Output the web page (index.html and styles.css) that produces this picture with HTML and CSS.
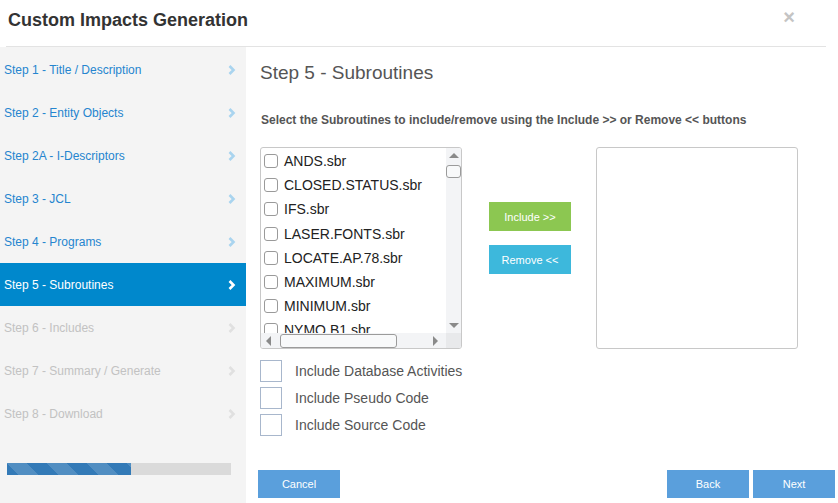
FILE: index.html
```html
<!DOCTYPE html>
<html>
<head>
<meta charset="utf-8">
<link rel="stylesheet" href="styles.css">
</head>
<body>
<div class="modal">
  <header class="header">
    <h1 class="title">Custom Impacts Generation</h1>
    <span class="close">×</span>
  </header>
  <div class="body">
    <aside class="sidebar">
      <nav class="steps">
        <a class="step done">Step 1 - Title / Description<svg class="chev" viewBox="0 0 8 10"><polyline points="1.5,1 5.5,5 1.5,9"/></svg></a>
        <a class="step done">Step 2 - Entity Objects<svg class="chev" viewBox="0 0 8 10"><polyline points="1.5,1 5.5,5 1.5,9"/></svg></a>
        <a class="step done">Step 2A - I-Descriptors<svg class="chev" viewBox="0 0 8 10"><polyline points="1.5,1 5.5,5 1.5,9"/></svg></a>
        <a class="step done">Step 3 - JCL<svg class="chev" viewBox="0 0 8 10"><polyline points="1.5,1 5.5,5 1.5,9"/></svg></a>
        <a class="step done">Step 4 - Programs<svg class="chev" viewBox="0 0 8 10"><polyline points="1.5,1 5.5,5 1.5,9"/></svg></a>
        <a class="step active">Step 5 - Subroutines<svg class="chev" viewBox="0 0 8 10"><polyline points="1.5,1 5.5,5 1.5,9"/></svg></a>
        <a class="step todo">Step 6 - Includes<svg class="chev" viewBox="0 0 8 10"><polyline points="1.5,1 5.5,5 1.5,9"/></svg></a>
        <a class="step todo">Step 7 - Summary / Generate<svg class="chev" viewBox="0 0 8 10"><polyline points="1.5,1 5.5,5 1.5,9"/></svg></a>
        <a class="step todo">Step 8 - Download<svg class="chev" viewBox="0 0 8 10"><polyline points="1.5,1 5.5,5 1.5,9"/></svg></a>
      </nav>
      <div class="progress"><div class="progress-bar" style="width:55.4%"></div></div>
    </aside>
    <main class="main">
      <h2 class="step-title">Step 5 - Subroutines</h2>
      <p class="instr">Select the Subroutines to include/remove using the Include &gt;&gt; or Remove &lt;&lt; buttons</p>
      <div class="picker">
        <div class="listbox">
          <div class="list-items">
            <label class="item"><span class="cb"></span>ANDS.sbr</label>
            <label class="item"><span class="cb"></span>CLOSED.STATUS.sbr</label>
            <label class="item"><span class="cb"></span>IFS.sbr</label>
            <label class="item"><span class="cb"></span>LASER.FONTS.sbr</label>
            <label class="item"><span class="cb"></span>LOCATE.AP.78.sbr</label>
            <label class="item"><span class="cb"></span>MAXIMUM.sbr</label>
            <label class="item"><span class="cb"></span>MINIMUM.sbr</label>
            <label class="item"><span class="cb"></span>NYMO.B1.sbr</label>
          </div>
          <div class="vscroll">
            <span class="arr up"></span>
            <span class="vthumb"></span>
            <span class="spacer"></span>
            <span class="arr down"></span>
          </div>
          <div class="hscroll">
            <span class="arr left"></span>
            <span class="hthumb"></span>
            <span class="spacer"></span>
            <span class="arr right"></span>
          </div>
          <div class="corner"></div>
        </div>
        <div class="movers">
          <button class="btn include">Include &gt;&gt;</button>
          <button class="btn remove">Remove &lt;&lt;</button>
        </div>
        <div class="selected"></div>
      </div>
      <div class="options">
        <label class="opt"><span class="bigcb"></span>Include Database Activities</label>
        <label class="opt"><span class="bigcb"></span>Include Pseudo Code</label>
        <label class="opt"><span class="bigcb"></span>Include Source Code</label>
      </div>
      <div class="footer">
        <button class="btn nav">Cancel</button>
        <div class="footer-right">
          <button class="btn nav">Back</button>
          <button class="btn nav">Next</button>
        </div>
      </div>
    </main>
  </div>
</div>
</body>
</html>
```

FILE: styles.css
```css
* { box-sizing: border-box; }
html, body { margin: 0; padding: 0; background: #fff; }
body {
  font-family: "Liberation Sans", Arial, sans-serif;
  width: 838px;
  height: 503px;
  overflow: hidden;
}
.modal { display: flex; flex-direction: column; height: 503px; }
.header {
  height: 47px;
  display: flex;
  align-items: flex-start;
  justify-content: space-between;
  position: relative;
}
.header::after {
  content: "";
  position: absolute;
  left: 6px;
  right: 12px;
  bottom: 0;
  height: 1px;
  background: #e3e3e3;
}
.title {
  margin: 9px 0 0 8px;
  font-size: 18px;
  line-height: 22px;
  font-weight: bold;
  color: #333;
}
.close {
  margin: 5px 43px 0 0;
  font-size: 20px;
  line-height: 24px;
  font-weight: bold;
  color: #c4c4c4;
}
.body { flex: 1; display: flex; }
.sidebar {
  width: 246px;
  background: #f4f4f4;
  display: flex;
  flex-direction: column;
}
.steps { display: flex; flex-direction: column; margin-top: 1px; }
.step {
  height: 43px;
  display: flex;
  align-items: center;
  justify-content: space-between;
  padding: 0 10px 0 4px;
  font-size: 12px;
  color: #2585cf;
}
.chev { width: 8px; height: 10px; fill: none; stroke-width: 2.6; }
.done .chev { stroke: #a9d4ef; }
.active { background: #0088cc; color: #fff; }
.active .chev { stroke: #fff; }
.todo { color: #c2c2c2; }
.todo .chev { stroke: #e0e0e0; }
.progress {
  margin: 28px 0 0 7px;
  width: 224px;
  height: 12px;
  background: #dadada;
}
.progress-bar {
  height: 100%;
  background-color: #337ab7;
  background-image: linear-gradient(45deg, rgba(255,255,255,.15) 25%, transparent 25%, transparent 50%, rgba(255,255,255,.15) 50%, rgba(255,255,255,.15) 75%, transparent 75%, transparent);
  background-size: 40px 40px;
}
.main {
  flex: 1;
  display: flex;
  flex-direction: column;
  padding-left: 14px;
}
.step-title {
  margin: 15px 0 0 0;
  font-size: 19px;
  line-height: 22px;
  font-weight: normal;
  color: #555;
}
.instr {
  margin: 29px 0 0 1px;
  font-size: 12px;
  line-height: 14px;
  font-weight: bold;
  color: #555;
}
.picker { display: flex; margin-top: 20px; height: 202px; }
.listbox {
  width: 202px;
  height: 202px;
  border: 1px solid #c8c8c8;
  border-radius: 3px;
  display: grid;
  grid-template-columns: 1fr 15px;
  grid-template-rows: 1fr 15px;
  overflow: hidden;
}
.list-items { overflow: hidden; padding: 1px 0 0 3px; }
.item {
  height: 24.2px;
  display: flex;
  align-items: center;
  font-size: 14px;
  color: #222;
  white-space: nowrap;
}
.cb {
  width: 14px;
  height: 14px;
  border: 1px solid #9a9a9a;
  border-radius: 3px;
  margin-right: 6px;
  background: #fff;
  flex: none;
}
.vscroll {
  background: #f3f4f6;
  display: flex;
  flex-direction: column;
  align-items: center;
}
.hscroll {
  background: #f3f4f6;
  display: flex;
  align-items: center;
}
.corner { background: #e8e9eb; }
.spacer { flex: 1; }
.arr { width: 0; height: 0; border-style: solid; flex: none; }
.up { border-width: 0 5px 5px 5px; border-color: transparent transparent #8a8a8a transparent; margin-top: 5px; }
.down { border-width: 5px 5px 0 5px; border-color: #8a8a8a transparent transparent transparent; margin-bottom: 5px; }
.left { border-width: 5px 5px 5px 0; border-color: transparent #8a8a8a transparent transparent; margin-left: 5px; }
.right { border-width: 5px 0 5px 5px; border-color: transparent transparent transparent #8a8a8a; margin-right: 8px; }
.vthumb {
  width: 15px;
  height: 13px;
  margin-top: 7px;
  border: 1px solid #9b9b9b;
  border-radius: 3px;
  background: #f8f9fa;
}
.hthumb {
  width: 117px;
  height: 14px;
  margin-left: 9px;
  border: 1px solid #9b9b9b;
  border-radius: 3px;
  background: #f8f9fa;
}
.movers {
  display: flex;
  flex-direction: column;
  gap: 14px;
  margin: 55px 0 0 27px;
}
.btn {
  border: 0;
  border-radius: 0;
  font-family: "Liberation Sans", Arial, sans-serif;
  font-size: 11px;
  color: #fff;
  padding: 0;
  width: 82px;
  height: 29px;
}
.include { background: #8cc751; }
.remove { background: #3db8dc; }
.selected {
  margin-left: 25px;
  width: 202px;
  height: 202px;
  border: 1px solid #c8c8c8;
  border-radius: 3px;
}
.options {
  display: flex;
  flex-direction: column;
  gap: 5px;
  margin-top: 11px;
}
.opt {
  display: flex;
  align-items: center;
  font-size: 14px;
  color: #555;
  height: 22px;
}
.bigcb {
  width: 22px;
  height: 22px;
  border: 1px solid #a8b7cc;
  margin-right: 13px;
}
.footer {
  margin-top: 34px;
  display: flex;
  justify-content: space-between;
  padding-right: 3px;
}
.footer-right { display: flex; gap: 4px; }
.nav { background: #5a9fdc; height: 28px; }
.footer > .nav { margin-left: -2px; }
```
